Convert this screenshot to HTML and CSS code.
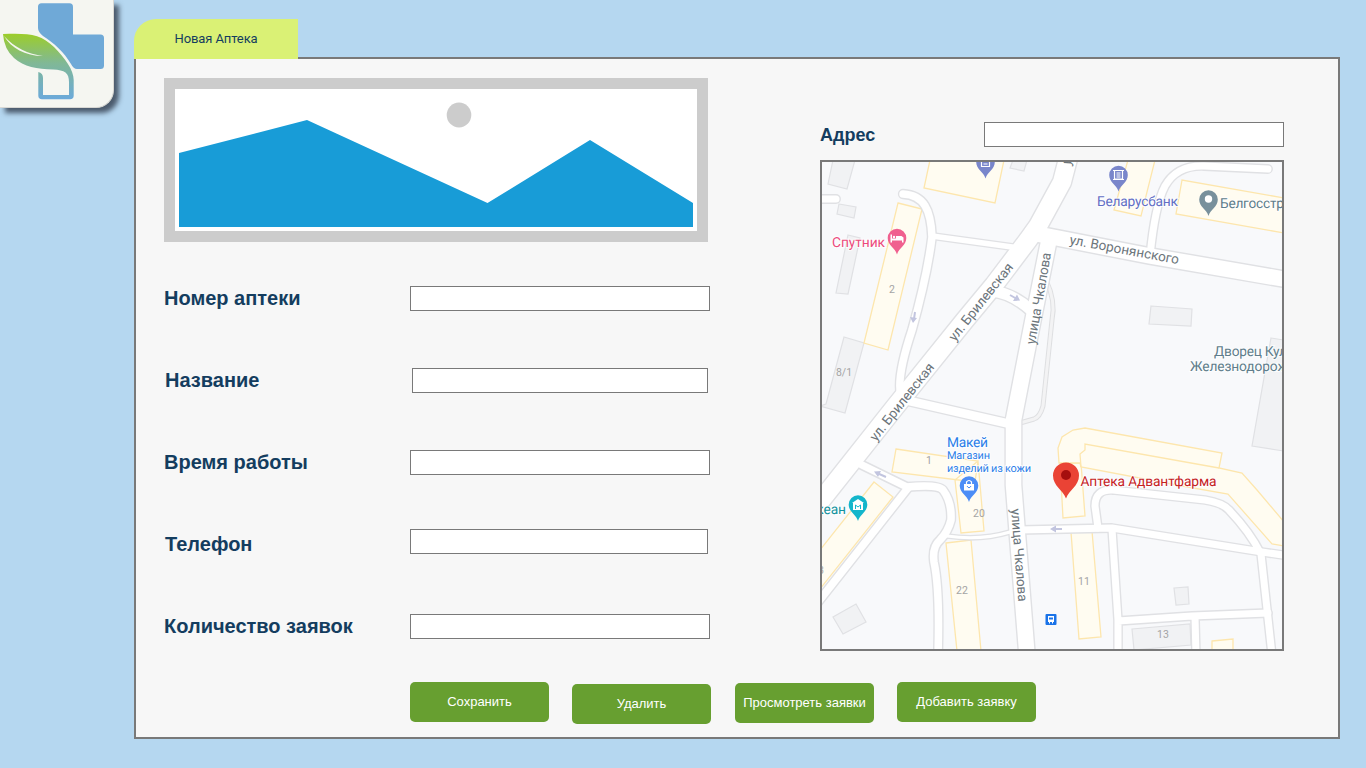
FILE: index.html
```html
<!DOCTYPE html>
<html lang="ru">
<head>
<meta charset="utf-8">
<title>Новая Аптека</title>
<link rel="stylesheet" href="styles.css">
</head>
<body>
<header class="logo">
  <svg width="108" height="104" viewBox="0 0 108 104">
    <defs>
      <linearGradient id="leaf" gradientUnits="userSpaceOnUse" x1="0" y1="33" x2="0" y2="100">
        <stop offset="0" stop-color="#9dce27"/><stop offset=".45" stop-color="#80b896"/><stop offset="1" stop-color="#6ba9dc"/>
      </linearGradient>
    </defs>
    <path fill="#6fa9d7" d="M41.500 3.300H69.500Q73 3.300 73 7V34.500H100.500Q104 34.500 104 38V65.500Q104 69 100.500 69H77Q73.500 69 71 64C64 52 54 43 43 36Q38 32 38 28V7Q38 3.300 41.500 3.300Z"/>
    <path fill="url(#leaf)" d="M3 34C28 33 41 34 54 47C65 58 73.700 70 73.700 80V95.500Q73.700 99.300 70 99.300H42Q38.300 99.300 38.300 95.500V72Q43 73 43 78V95H69V82C69 73 65 70 53 69.500C37 69 24 67 14 58Q4 49 3 34Z"/>
    <path fill="#f5f6f1" d="M4 36C11 48 25 56 43 56C28 54 15 48 4 36Z"/>
  </svg>
</header>
<main class="page">
  <div class="tab">Новая Аптека</div>
  <section class="panel">
    <div class="columns">
      <div class="details">
        <svg class="photo" width="544" height="164" viewBox="0 0 544 164">
          <path fill="#ccc" d="M0 0H544V164H0Z"/><path fill="#fff" d="M11 11H533V153H11Z"/>
          <path fill="#189cd7" d="M15 75L143 42L323.500 125L426 62L529 125V149H15Z"/>
          <ellipse cx="295" cy="37" rx="12.300" ry="12.500" fill="#ccc"/>
        </svg>
        <div class="fields">
          <label class="row"><span class="caption">Номер аптеки</span><input class="box"></label>
          <label class="row"><span class="caption inset">Название</span><input class="box narrow"></label>
          <label class="row"><span class="caption">Время работы</span><input class="box"></label>
          <label class="row"><span class="caption inset">Телефон</span><input class="box phone"></label>
          <label class="row"><span class="caption">Количество заявок</span><input class="box"></label>
        </div>
      </div>
      <div class="location">
        <label class="address"><span class="caption small">Адрес</span><input class="box"></label>
        <svg class="map" width="460" height="487" viewBox="822 162 460 487">
          <defs>
            <path id="pin" d="M0 0C-2-7-9.300-9-9.300-16.500A9.300 9.300 0 0 1 9.300-16.500C9.300-9 2-7 0 0Z"/>
            <g id="roads">
              <path class="road w7" d="M810 199H836"/>
              <path class="road w8" d="M903 194C924 195 931 210 932 237C928 270 919 305 912 330Q896 378 901 396"/>
              <path class="road w6" d="M932 236L1012 247"/>
              <path class="road w10" d="M992 291Q1012 293 1032 311"/>
              <path class="road w7" d="M1150 256Q1155 205 1165 186Q1177 165 1204 166L1268 169"/>
              <path class="road w18" d="M1069 155L1062 182L1038 226L1028 240L994 285L965 320L895 407L815 508"/>
              <path class="road w16" d="M1032 233L1150 256L1295 281"/>
              <path class="road w16" d="M1049 240L1033 320L1013.500 420V485L1027 655"/>
              <path class="road w9" d="M905 400L1010 424"/>
              <path class="road w8" d="M862 465L907 487Q938 484 943 490Q952 502 951 520Q948 532 940 540Q932 547 934 562Q940 590 938 655"/>
              <path class="road w8" d="M908 488L815 606"/>
              <path class="road w3" d="M947 536Q980 541 1010 532"/>
              <path class="road w7" d="M1020 530L1112 528L1262 552L1290 556"/>
              <path class="road w7" d="M1098 528L1095 506Q1095 489 1113 490L1205 500Q1223 503 1229 510Q1250 532 1261 554L1272 655"/>
              <path class="road w7" d="M1112 529L1118 620V655M1118 621L1192 616L1268 613M1195 617L1196 655"/>
            </g>
          </defs>
          <path fill="#f8f9fb" d="M822 162H1282V649H822Z"/>
          <path class="building" d="M833 160L828 184L847 189L855 160ZM839 204L856 207L854 218L837 214ZM848 235L860 238L848 294L836 293ZM844 337L864 343L845 413L820 406L826 404ZM856 604L866 622L843 634L833 617ZM1013 160L1010 168L1024 171L1027 160ZM1151 306L1192 309L1191 326L1149 324ZM1271 338L1290 341V452L1252 446ZM1174 588L1188 587L1189 604L1176 605ZM1132 629L1190 624L1191 645L1134 650Z"/>
          <g class="shop">
            <path d="M930 160L924 188L995 203L1004 160ZM898 203L922 209L888 350L864 343ZM896 449L978 461L975 482L892 472ZM955 480L978 461L984 531L961 533ZM874 482L893 497L820 589V550ZM946 543L971 540L981 651H957ZM1071 532L1092 531L1101 637L1079 639ZM1128 160L1114 210L1141 216L1155 160ZM1182 180L1176 214L1290 234V199ZM1060 463L1063 518L1085 516L1081 463ZM1212 641L1233 639V651H1212Z"/>
            <path d="M1059 463L1058 448L1062 437L1073 430L1085 428L1222 453L1219 468L1242 473L1257 490L1290 529V547L1272 544L1228 494L1182 486L1081 467L1080 463Z"/>
            <path d="M1219 468L1085 444V450L1080 454L1081 467" fill="none"/>
          </g>
          <path class="lane-edge" d="M1046 280Q1056 301 1052 320L1043 406Q1040 417 1034 419L1020 423"/>
          <path class="lane" d="M1046 280Q1056 301 1052 320L1043 406Q1040 417 1034 419L1020 423"/>
          <use href="#roads" class="edges"/>
          <use href="#roads" class="surface"/>
          <g class="arrows">
            <path d="M1053 529H1062M877 473L886 477M1010 295L1017 299M915 312L914 319"/>
            <path class="head" d="M1050 529L1056 525.500V532.500ZM874 471.500L881 471L878 477ZM1020 300.500L1013 301L1017 294.500ZM913 323L910 317L917 318Z"/>
          </g>
          <g class="street">
            <text transform="translate(1069 244) rotate(10.500)" textLength="111">ул. Воронянского</text>
            <text transform="translate(955 342) rotate(-51.700)" textLength="95">ул. Брилевская</text>
            <text transform="translate(876 442) rotate(-51.700)" textLength="95">ул. Брилевская</text>
            <text transform="translate(1035 345) rotate(-80)" textLength="93">улица Чкалова</text>
            <text transform="translate(1011 509) rotate(85.500)" textLength="93">улица Чкалова</text>
            <text transform="translate(1070 166) rotate(-66)">у</text>
          </g>
          <g class="number">
            <text x="892" y="293">2</text><text x="844" y="376">8/1</text><text x="929" y="464">1</text><text x="979" y="517">20</text><text x="962" y="594">22</text><text x="1084" y="585">11</text><text x="1163" y="638">13</text><text x="821" y="574">3</text>
          </g>
          <g class="place">
            <text x="832" y="247" textLength="53" fill="#ec4a7c">Спутник</text>
            <text x="1097" y="206" textLength="81" fill="#626fc5">Беларусбанк</text>
            <text x="1220" y="208" textLength="64" fill="#607d8b">Белгосстр</text>
            <text x="1214" y="356" textLength="73" fill="#607d8b">Дворец Кул</text>
            <text x="1190" y="371" textLength="98" fill="#607d8b">Железнодорож</text>
            <text x="947" y="447" textLength="41" fill="#2a7de9">Макей</text>
            <text class="minor" x="947" y="459" textLength="43" fill="#2a7de9">Магазин</text>
            <text class="minor" x="947" y="471.500" textLength="84" fill="#2a7de9">изделий из кожи</text>
            <text x="846" y="514" text-anchor="end" textLength="39" fill="#12929e">Океан</text>
            <text x="1080.500" y="485.500" textLength="136" fill="#c5221f">Аптека Адвантфарма</text>
          </g>
          <g transform="translate(897 254.500)"><use href="#pin" fill="#f0608f"/><path fill="#fff" d="M-6.500-20H-5V-16H-1V-18.500H4.500L6.500-17V-12H5V-14H-5V-12H-6.500Z"/><circle cx="-3" cy="-17.500" r="1.200" fill="#fff"/></g>
          <g transform="translate(985.500 178.500)"><use href="#pin" fill="#7986cb"/><path class="glyph" d="M-4-20H4V-12H-4ZM-2-17H2M-2-14.500H2"/></g>
          <g transform="translate(1118.500 191.500)"><use href="#pin" fill="#7986cb"/><path class="glyph" d="M-5.500-21H5.500M-4-21V-12.500H4V-21M-5.500-12H5.500M-2-18.500H2M-2-16.500H2M-2-14.500H2"/></g>
          <g transform="translate(1208.500 216)"><use href="#pin" fill="#78909c"/><circle cy="-17" r="3.700" fill="#fff"/></g>
          <g transform="translate(969 502)"><use href="#pin" fill="#4c8df6"/><path fill="#fff" d="M-5-18H5V-11.500H-5Z"/><path class="glyph" d="M-2.500-18V-20Q0-23 2.500-20V-18"/><path d="M-2-16Q0-12.500 2-16" fill="none" stroke="#4c8df6"/></g>
          <g transform="translate(858 521)"><use href="#pin" fill="#14b6cb"/><path fill="#fff" d="M-6-18L0-22L6-18ZM-5-18H5V-11H-5Z"/><path d="M-2.500-12V-16L0-14L2.500-16V-12" fill="none" stroke="#14b6cb"/></g>
          <path fill="#ea4335" d="M1066 498.500C1063 490 1053 486 1053 475.500A13 13 0 0 1 1079 475.500C1079 486 1069 490 1066 498.500Z"/>
          <circle cx="1066" cy="475" r="5" fill="#a50e0e"/>
          <rect x="1045.500" y="614" width="11" height="11" rx="1" fill="#1a73e8"/>
          <path fill="#fff" d="M1048 616H1054V622H1053V623.500H1052V622H1050V623.500H1049V622H1048Z"/><path fill="#1a73e8" d="M1049 617.500H1053V619.500H1049Z"/>
        </svg>
      </div>
    </div>
    <div class="actions">
      <button class="btn">Сохранить</button>
      <button class="btn lower">Удалить</button>
      <button class="btn mid">Просмотреть заявки</button>
      <button class="btn">Добавить заявку</button>
    </div>
  </section>
</main>
</body>
</html>
```
FILE: styles.css
```css
* { box-sizing: border-box; }
body {
  margin: 0;
  height: 768px;
  overflow: hidden;
  display: flex;
  align-items: flex-start;
  gap: 20px;
  background: #b5d7f0;
  color: #143d5f;
  font-family: "Liberation Sans", Arial, sans-serif;
}
.logo {
  flex: none;
  width: 114px;
  height: 108px;
  background: #f5f6f1;
  border-right: 1px solid #d8d8d4;
  border-bottom: 1px solid #d8d8d4;
  border-radius: 0 0 18px 0;
  box-shadow: 5px 5px 5px rgba(40, 50, 65, .75);
}
.logo svg { display: block; }
.page { width: 1206px; padding-top: 19px; }
.tab {
  position: relative;
  width: 164px;
  height: 40px;
  margin-bottom: -2px;
  border-radius: 22px 0 0 0;
  background: #daf175;
  font: 13px/39px Roboto, sans-serif;
  letter-spacing: -.1px;
  text-align: center;
}
.panel {
  height: 682px;
  padding: 19px 0 0 28px;
  background: #f7f7f7;
  border: 2px solid #797979;
}
.columns { display: flex; gap: 110px; height: 603px; }
.details { width: 546px; }
.photo { display: block; }
.fields { padding-top: 15px; }
.row { display: flex; align-items: center; height: 82px; }
.caption { width: 246px; font-size: 20px; line-height: 24px; font-weight: 700; }
.inset { padding-left: 1px; }
.caption.small { width: 164px; padding-top: 2px; font-size: 18px; }
.box {
  width: 300px;
  height: 25px;
  margin: 1px 0 0;
  padding: 0 4px;
  border: 1px solid #797979;
  border-radius: 0;
  background: #fff;
}
.narrow { width: 296px; margin-left: 2px; }
.phone { width: 298px; margin: 0 0 5px; }
.location { width: 464px; padding-top: 43px; }
.address { display: flex; align-items: center; height: 26px; margin-bottom: 13px; }
.map { display: block; box-sizing: content-box; border: 2px solid #797979; font-family: Roboto, sans-serif; }
.actions { display: flex; align-items: flex-start; gap: 23px; padding: 1px 0 0 246px; }
.btn {
  width: 139px;
  height: 40px;
  padding: 0 0 2px;
  border: 0;
  border-radius: 5px;
  background: #679f30;
  color: #fff;
  font: 13px "Liberation Sans", Arial, sans-serif;
  white-space: nowrap;
}
.lower { margin-top: 2px; }
.mid { margin: 1px 0 0 1px; }

.road { fill: none; stroke-linecap: round; stroke-linejoin: round; stroke-width: calc(var(--w) + var(--edge)); }
.w3 { --w: 3px; }
.w6 { --w: 5.5px; }
.w7 { --w: 7px; }
.w8 { --w: 7.5px; }
.w9 { --w: 8.5px; }
.w10 { --w: 11px; }
.w16 { --w: 15.5px; }
.w18 { --w: 18px; }
.edges { --edge: 2.8px; stroke: #e0e1e4; }
.surface { --edge: 0px; stroke: #fff; }
.lane-edge, .lane { fill: none; stroke: #dedfe1; stroke-width: 5px; }
.lane { stroke: #f3f3f4; stroke-width: 3px; }
.building { fill: #f1f2f4; stroke: #e0e1e4; stroke-width: 1.2px; }
.shop { fill: #fffcf1; stroke: #fde6ad; stroke-width: 1.3px; }
.arrows { fill: none; stroke: #c2c5df; stroke-width: 2px; }
.arrows .head { fill: #c2c5df; stroke: none; }
.street text { fill: #6c757b; font-size: 13.5px; }
.number { fill: #a4a4a4; font-size: 10.5px; text-anchor: middle; }
.place { font-size: 13.8px; }
.place text { stroke: rgba(255, 255, 255, .8); stroke-width: 2px; paint-order: stroke; }
.place text, .street text { text-rendering: geometricPrecision; }
.place .minor { font-size: 11px; }
.glyph { fill: none; stroke: #fff; stroke-width: 1.2px; }
```
